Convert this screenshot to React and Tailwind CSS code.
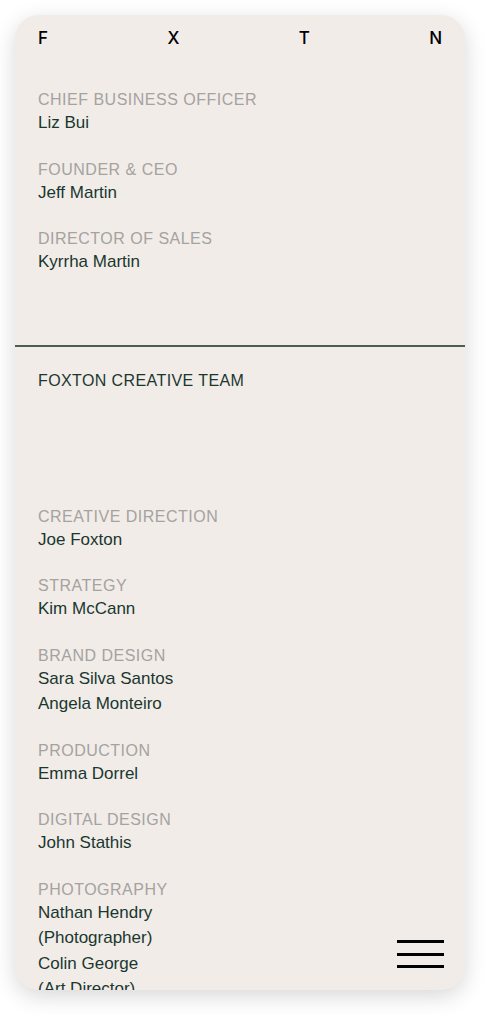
import React from 'react';

const leadership = [
    { role: 'Chief Business Officer', names: ['Liz Bui'] },
    { role: 'Founder & CEO', names: ['Jeff Martin'] },
    { role: 'Director of Sales', names: ['Kyrrha Martin'] },
];

const creative = [
    { role: 'Creative Direction', names: ['Joe Foxton'] },
    { role: 'Strategy', names: ['Kim McCann'] },
    { role: 'Brand Design', names: ['Sara Silva Santos', 'Angela Monteiro'] },
    { role: 'Production', names: ['Emma Dorrel'] },
    { role: 'Digital Design', names: ['John Stathis'] },
    { role: 'Photography', names: ['Nathan Hendry', '(Photographer)', 'Colin George', '(Art Director)'] },
];

function Credit({ role, names }) {
    return (
        <div>
            <p className="text-[16px] leading-[20px] uppercase tracking-[0.5px] text-[#a5a2a0]">{role}</p>
            {names.map((n) => (
                <p key={n} className="text-[17px] leading-[25.5px] text-[#1a372f]">{n}</p>
            ))}
        </div>
    );
}

export default function App() {
    return (
        <div className="bg-white w-[490px] h-[1015px] pt-[15px] pl-[15px]" style={{ fontFamily: '"Liberation Sans", Arial, sans-serif' }}>
            <div className="relative w-[450px] h-[975px] rounded-[24px] bg-[#f1ece8] overflow-hidden shadow-[0_6px_22px_rgba(0,0,0,0.16)]">
                <header className="flex justify-between px-[23px] pt-[12px] text-[17px] leading-[22px] font-medium text-black" style={{ fontFamily: 'Inter, "Liberation Sans", sans-serif' }}>
                    <span>F</span>
                    <span>X</span>
                    <span>T</span>
                    <span>N</span>
                </header>

                <section className="px-[23px] pt-[41px] h-[296px] flex flex-col gap-[24px]">
                    {leadership.map((c) => <Credit key={c.role} {...c} />)}
                </section>

                <div className="h-[1.5px] bg-[#4b5f58]" />

                <section className="px-[23px] pt-[23px]">
                    <h2 className="text-[16px] leading-[22px] uppercase tracking-[0.4px] text-[#1a372f]">Foxton Creative Team</h2>
                    <div className="pt-[115px] flex flex-col gap-[24px]">
                        {creative.map((c) => <Credit key={c.role} {...c} />)}
                    </div>
                </section>

                <button className="absolute right-[21px] bottom-[22px] w-[47px] flex flex-col gap-[9.5px]">
                    <span className="h-[3px] bg-black" />
                    <span className="h-[3px] bg-black" />
                    <span className="h-[3px] bg-black" />
                </button>
            </div>
        </div>
    );
}
